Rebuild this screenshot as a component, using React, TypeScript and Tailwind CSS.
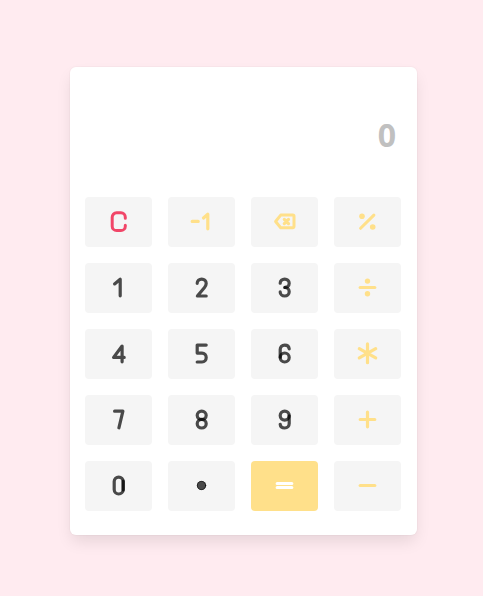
import { useState, type ReactNode } from 'react';

type Tone = 'digit' | 'clear' | 'operator' | 'equals';

interface Key {
  label: string;
  tone: Tone;
  icon: ReactNode;
}

const tones: Record<Tone, string> = {
  digit: 'bg-[#f5f5f5] text-black/70',
  clear: 'bg-[#f5f5f5] text-[#f14668]',
  operator: 'bg-[#f5f5f5] text-[#ffe08a]',
  equals: 'bg-[#ffe08a] text-white',
};

const viewBoxes: Record<Tone, string> = {
  digit: '-0.9 0 25 24',
  clear: '-0.9 0 25 24',
  operator: '-0.5 0 25 24',
  equals: '-0.5 0 25 24',
};

const keys: Key[] = [
  {
    label: 'Clear',
    tone: 'clear',
    icon: <path d="M18.4 8.2V7.2a4.4 4.4 0 0 0-4.4-4.4H9.7a4.4 4.4 0 0 0-4.4 4.4v9a4.4 4.4 0 0 0 4.4 4.4H14a4.4 4.4 0 0 0 4.4-4.4v-1" strokeWidth="3" />,
  },
  { label: 'Negate', tone: 'operator', icon: <path d="M2.7 11.4H8.7M14 8l4.3-3.8v14.6" /> },
  {
    label: 'Backspace',
    tone: 'operator',
    icon: (
      <>
        <path d="M8.2 5.1h12.1a1.2 1.2 0 0 1 1.2 1.2v10.3a1.2 1.2 0 0 1-1.2 1.2H8.2L3.1 11.5z" strokeWidth="3" />
        <path d="M11.8 9.4l4.2 4.2M16 9.4l-4.2 4.2" strokeWidth="3.2" />
      </>
    ),
  },
  {
    label: 'Percent',
    tone: 'operator',
    icon: (
      <>
        <path d="M18.4 5.1L5.1 18.3" strokeWidth="3" />
        <circle cx="6.5" cy="6.3" r="2.8" fill="currentColor" stroke="none" />
        <circle cx="17.2" cy="17" r="2.8" fill="currentColor" stroke="none" />
      </>
    ),
  },
  { label: '1', tone: 'digit', icon: <path d="M7.7 7.9l5.6-4.7v16.6" /> },
  { label: '2', tone: 'digit', icon: <path d="M7.3 7.3c0-2.5 2-4.2 4.5-4.2s4.5 1.7 4.5 4.3c0 1.7-.8 2.9-1.9 4.3L7.5 20h8.8" /> },
  {
    label: '3',
    tone: 'digit',
    icon: (
      <>
        <path d="M7.3 7.2c0-2.4 2-4.1 4.5-4.1s4.5 1.7 4.5 4.2-2 4.1-4.3 4.1" />
        <path d="M12 11.5c2.3 0 4.3 1.8 4.3 4.2S14.3 20 11.8 20s-4.5-1.7-4.5-4.1" />
      </>
    ),
  },
  {
    label: 'Divide',
    tone: 'operator',
    icon: (
      <>
        <path d="M4.7 11.5h14.6" />
        <circle cx="12" cy="5.1" r="2.7" fill="currentColor" stroke="none" />
        <circle cx="12" cy="17.7" r="2.7" fill="currentColor" stroke="none" />
      </>
    ),
  },
  { label: '4', tone: 'digit', icon: <path d="M15.2 19.8V4L6.7 15.4h10.6" /> },
  { label: '5', tone: 'digit', icon: <path d="M16.3 3.1h-9v8h4.8c2.5 0 4.2 1.8 4.2 4.4S14.6 20 12.1 20H7.3" /> },
  {
    label: '6',
    tone: 'digit',
    icon: (
      <>
        <path d="M16.3 6.8c-.2-2.3-2.1-3.7-4.5-3.7C9 3.1 7.3 5 7.3 7.6v7.6" />
        <ellipse cx="11.8" cy="15.5" rx="4.5" ry="4.5" />
      </>
    ),
  },
  { label: 'Multiply', tone: 'operator', icon: <path d="M12 1.9v18.8M3.8 6.7l16.4 9.2M20.2 6.7L3.8 15.9" /> },
  { label: '7', tone: 'digit', icon: <path d="M7.7 3.2H16l-4 16.6" /> },
  {
    label: '8',
    tone: 'digit',
    icon: (
      <>
        <ellipse cx="11.8" cy="7.3" rx="4.5" ry="4.2" />
        <ellipse cx="11.8" cy="15.7" rx="4.5" ry="4.3" />
      </>
    ),
  },
  {
    label: '9',
    tone: 'digit',
    icon: (
      <>
        <path d="M7.3 16.3c.2 2.3 2.1 3.7 4.5 3.7 2.8 0 4.5-1.9 4.5-4.5V7.9" />
        <ellipse cx="11.8" cy="7.6" rx="4.5" ry="4.5" />
      </>
    ),
  },
  { label: 'Add', tone: 'operator', icon: <path d="M4.7 11.5h14.6M12 4.2v14.6" /> },
  {
    label: '0',
    tone: 'digit',
    icon: (
      <>
        <rect x="7.3" y="3.1" width="9" height="16.9" rx="4.5" />
        <path d="M16.3 7v9" />
      </>
    ),
  },
  {
    label: 'Decimal point',
    tone: 'digit',
    icon: (
      <>
        <circle cx="11.6" cy="11.5" r="4.6" fill="currentColor" stroke="none" />
        <circle cx="11.6" cy="11.5" r="4.2" strokeWidth="0.8" />
      </>
    ),
  },
  { label: 'Equals', tone: 'equals', icon: <path d="M4.7 9.5h14.6M4.7 13.5h14.6" /> },
  { label: 'Subtract', tone: 'operator', icon: <path d="M4.7 11.5h14.6" /> },
];

const symbols: Record<string, string> = {
  Add: '+',
  Subtract: '-',
  Multiply: '*',
  Divide: '/',
  Percent: '%',
};

function calculate(a: number, b: number, operator: string) {
  if (operator === '+') return a + b;
  if (operator === '-') return a - b;
  if (operator === '*') return a * b;
  if (operator === '/') return a / b;
  return (a * b) / 100;
}

export default function App() {
  const [value, setValue] = useState('0');
  const [stored, setStored] = useState<number | null>(null);
  const [operator, setOperator] = useState('');
  const [fresh, setFresh] = useState(true);

  function press(label: string) {
    if (/^\d$/.test(label)) {
      setValue(fresh || value === '0' ? label : value + label);
      setFresh(false);
    } else if (label === 'Clear') {
      setValue('0');
      setStored(null);
      setOperator('');
      setFresh(true);
    } else if (label === 'Negate') {
      setValue(String(-Number(value)));
    } else if (label === 'Backspace') {
      setValue(value.slice(0, -1) || '0');
    } else if (label === 'Decimal point') {
      setValue(fresh ? '0.' : value.includes('.') ? value : value + '.');
      setFresh(false);
    } else {
      const result = stored !== null && operator ? calculate(stored, Number(value), operator) : Number(value);
      setValue(String(result));
      setStored(label === 'Equals' ? null : result);
      setOperator(symbols[label] ?? '');
      setFresh(true);
    }
  }

  return (
    <main className="flex min-h-screen items-center justify-center bg-[#ffebf0] pt-1.5 pl-1 font-['Open_Sans',sans-serif]">
      <section
        aria-label="Calculator"
        className="w-full max-w-[347px] rounded-md bg-white pr-4 pb-6 pl-[15px] shadow-[0_8px_16px_-2px_rgba(10,10,10,0.1),0_0_0_1px_rgba(10,10,10,0.02)]"
      >
        <output className="block overflow-hidden pt-12 pr-[5px] pb-[42px] text-right text-[32px] leading-10 font-bold text-[#c0c0c0]">
          {value}
        </output>
        <div className="grid grid-cols-4 gap-4">
          {keys.map(({ label, tone, icon }) => (
            <button
              key={label}
              type="button"
              aria-label={label}
              onClick={() => press(label)}
              className={`flex h-[50px] cursor-pointer items-center justify-center rounded ${tones[tone]}`}
            >
              <svg
                viewBox={viewBoxes[tone]}
                className="h-6 w-[25px]"
                fill="none"
                stroke="currentColor"
                strokeWidth="3.2"
                strokeLinecap="round"
                strokeLinejoin="round"
                aria-hidden="true"
              >
                {icon}
              </svg>
            </button>
          ))}
        </div>
      </section>
    </main>
  );
}
